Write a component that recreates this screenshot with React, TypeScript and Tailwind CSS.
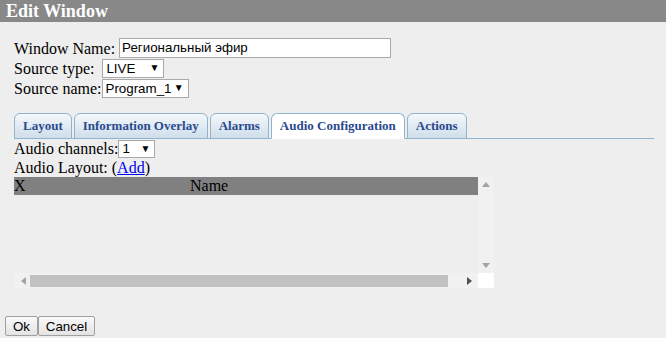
import { useState } from 'react';

const serif = { fontFamily: '"Liberation Serif", "Times New Roman", serif' };

const tabs = ['Layout', 'Information Overlay', 'Alarms', 'Audio Configuration', 'Actions'];

const Caret = () => <span className="text-[10px] leading-none">▼</span>;

const App = () => {
  const [active, setActive] = useState('Audio Configuration');

  return (
    <div className="w-[666px] h-[338px] bg-[#eeeeee] text-black text-[16px] leading-[19px] overflow-hidden" style={serif}>
      {/* titlebar */}
      <div className="h-[22px] bg-[#888888] px-[6px] text-white font-bold text-[18px] leading-[22px]">
        Edit Window
      </div>

      <div className="pl-[14px] pr-[12px] pt-[16px]">
        <div className="flex items-center h-[20px]">
          <span>Window Name:</span>
          <div className="ml-[4px] w-[272px] h-[20px] bg-white border border-[#a9a9a9] px-[2px] text-[13.33px] leading-[18px] font-['Liberation_Sans',Arial,sans-serif]">
            Региональный эфир
          </div>
        </div>
        <div className="flex items-center h-[20px]">
          <span>Source type:</span>
          <div className="ml-[8px] w-[62px] h-[19px] bg-white border border-[#a9a9a9] pl-[3px] pr-[4px] flex items-center justify-between text-[13.33px] font-['Liberation_Sans',Arial,sans-serif]">
            <span>LIVE</span>
            <Caret />
          </div>
        </div>
        <div className="flex items-center h-[20px]">
          <span>Source name:</span>
          <div className="w-[87px] h-[19px] bg-white border border-[#a9a9a9] pl-[3px] pr-[4px] flex items-center justify-between text-[13.33px] font-['Liberation_Sans',Arial,sans-serif]">
            <span>Program_1</span>
            <Caret />
          </div>
        </div>

        {/* tabs */}
        <div className="mt-[14px] flex items-end gap-[2px] border-b border-[#8fb4cc] h-[27px]">
          {tabs.map(t => (
            <button
              key={t}
              onClick={() => setActive(t)}
              className={
                'h-[26px] -mb-px px-[8px] border border-[#8fb4cc] rounded-t-[6px] text-[13px] font-bold text-[#2a4a8f] leading-[24px] ' +
                (active === t
                  ? 'bg-white border-b-white'
                  : 'bg-gradient-to-b from-[#f4f8fb] to-[#cfdeea]')
              }
              style={serif}
            >
              {t}
            </button>
          ))}
        </div>

        <div className="flex items-center h-[19px]">
          <span>Audio channels:</span>
          <div className="w-[37px] h-[18px] bg-white border border-[#a9a9a9] pl-[3px] pr-[4px] flex items-center justify-between text-[13.33px] font-['Liberation_Sans',Arial,sans-serif]">
            <span>1</span>
            <Caret />
          </div>
        </div>
        <div className="h-[19px]">
          Audio Layout: (<a href="#" className="text-[#0000ee] underline">Add</a>)
        </div>

        {/* table with scrollbars */}
        <div className="w-[480px] h-[111px] grid grid-cols-[464px_16px] grid-rows-[96px_15px]">
          <div className="bg-[#eeeeee]">
            <div className="h-[18px] bg-[#808080] flex leading-[18px]">
              <span className="w-[176px]">X</span>
              <span>Name</span>
            </div>
          </div>
          <div className="bg-[#f1f1f1] flex flex-col items-center justify-between py-[5px]">
            <svg width="8" height="5" viewBox="0 0 8 5"><path d="M0 5 L4 0 L8 5 Z" fill="#a3a3a3" /></svg>
            <svg width="8" height="5" viewBox="0 0 8 5"><path d="M0 0 L4 5 L8 0 Z" fill="#a3a3a3" /></svg>
          </div>
          <div className="bg-[#f1f1f1] flex items-center pl-[7px] pr-[6px]">
            <svg width="5" height="8" viewBox="0 0 5 8"><path d="M5 0 L0 4 L5 8 Z" fill="#a3a3a3" /></svg>
            <div className="ml-[4px] w-[418px] h-[12px] bg-[#c1c1c1]" />
            <div className="flex-1" />
            <svg width="5" height="8" viewBox="0 0 5 8"><path d="M0 0 L5 4 L0 8 Z" fill="#505050" /></svg>
          </div>
          <div className="bg-white" />
        </div>
      </div>

      {/* buttons */}
      <div className="mt-[28px] pl-[5px] flex font-['Liberation_Sans',Arial,sans-serif] text-[13.33px]">
        <button className="h-[20px] w-[33px] border border-[#a0a0a0] bg-gradient-to-b from-[#fafafa] to-[#e3e3e3] rounded-[2px]">Ok</button>
        <button className="h-[20px] w-[57px] border border-[#a0a0a0] bg-gradient-to-b from-[#fafafa] to-[#e3e3e3] rounded-[2px]">Cancel</button>
      </div>
    </div>
  );
};

export default App;
